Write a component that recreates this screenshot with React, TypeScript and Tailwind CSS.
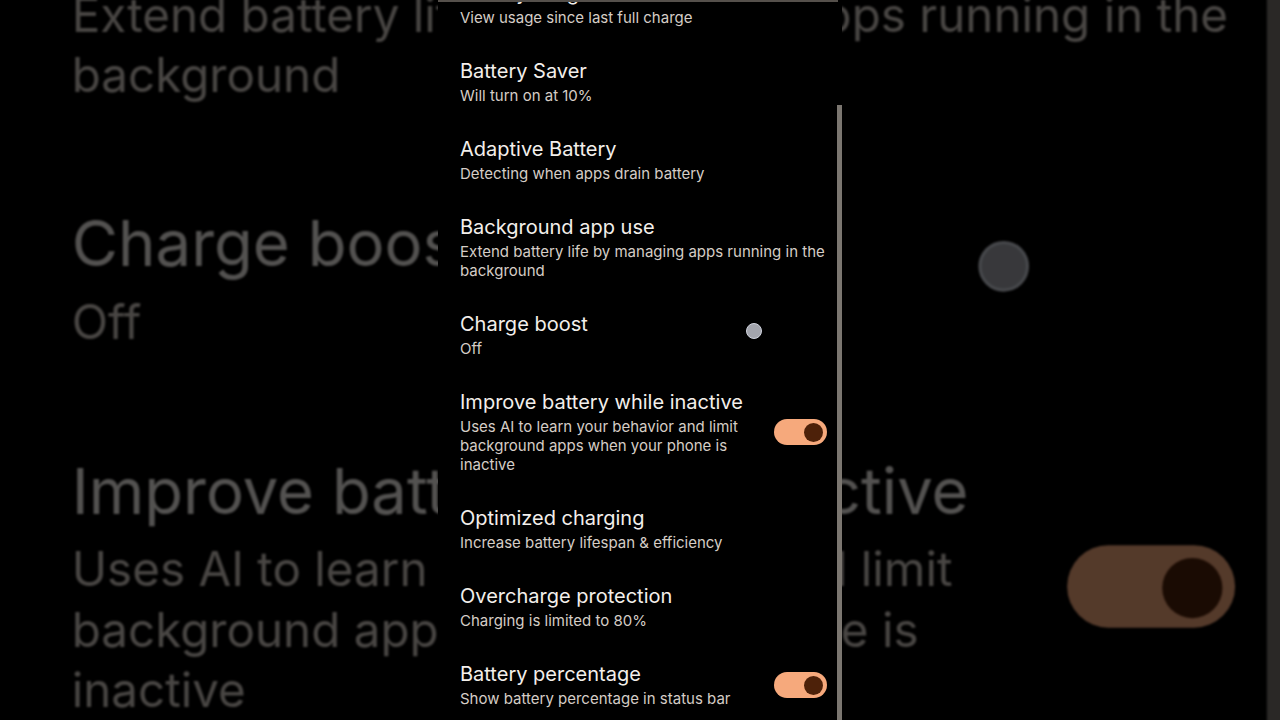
import React from 'react';

type Row = {
  title: string;
  summary: string;
  toggle?: boolean;
};

const ROWS: Row[] = [
  { title: 'Battery usage', summary: 'View usage since last full charge' },
  { title: 'Battery Saver', summary: 'Will turn on at 10%' },
  { title: 'Adaptive Battery', summary: 'Detecting when apps drain battery' },
  {
    title: 'Background app use',
    summary: 'Extend battery life by managing apps running in the background',
  },
  { title: 'Charge boost', summary: 'Off' },
  {
    title: 'Improve battery while inactive',
    summary: 'Uses AI to learn your behavior and limit background apps when your phone is inactive',
    toggle: true,
  },
  { title: 'Optimized charging', summary: 'Increase battery lifespan & efficiency' },
  { title: 'Overcharge protection', summary: 'Charging is limited to 80%' },
  { title: 'Battery percentage', summary: 'Show battery percentage in status bar', toggle: true },
];

const Toggle: React.FC = () => (
  <div className="ml-[22px] flex h-[26px] w-[53px] shrink-0 items-center justify-end rounded-full bg-[#f6a97c] pr-[4px]">
    <div className="h-[19px] w-[19px] rounded-full bg-[#4d2109]" />
  </div>
);

// the phone screen, drawn once at real size and once blown up behind it
const PhoneScreen: React.FC = () => {
  return (
    <div className="relative h-[720px] w-[404px] overflow-hidden bg-black font-['Inter',sans-serif]">
      <div className="-mt-[35px] flex flex-col">
        {ROWS.map((row) => (
          <div key={row.title} className="flex items-center py-[16px] pl-[22px] pr-[15px]">
            <div className="min-w-0 flex-1">
              <div className="text-[20px] leading-[25px] text-[#f3efeb]">{row.title}</div>
              <div className="mt-[2px] text-[15px] leading-[19px] text-[#d5cdc6]">{row.summary}</div>
            </div>
            {row.toggle && <Toggle />}
          </div>
        ))}
      </div>

      {/* header divider */}
      <div className="absolute left-0 right-[4px] top-0 h-[2px] bg-[#55504b]" />

      {/* touch indicator */}
      <div className="absolute left-[308px] top-[323px] h-4 w-4 rounded-full border border-[#d0d4de] bg-[#a3a5ad]" />

      {/* scroll indicator */}
      <div className="absolute bottom-0 right-0 top-[105px] w-[5px] bg-[#7b7670]" />
    </div>
  );
};

const App: React.FC = () => {
  return (
    <div className="relative flex h-[720px] w-[1280px] justify-center overflow-hidden bg-black">
      {/* zoomed, dimmed copy filling the sides */}
      <div
        aria-hidden="true"
        className="absolute left-[2px] top-[-783px] origin-top-left scale-[3.17] opacity-[0.34] blur-[0.3px]"
      >
        <PhoneScreen />
      </div>

      <div className="relative">
        <PhoneScreen />
      </div>
    </div>
  );
};

export default App;
